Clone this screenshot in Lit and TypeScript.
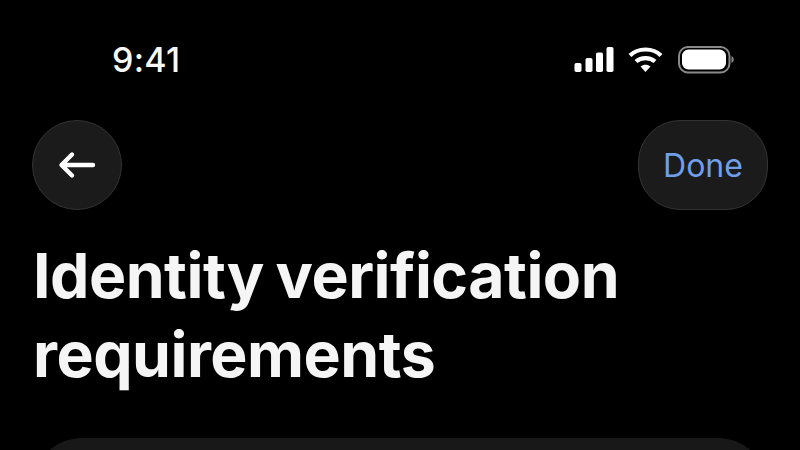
import { LitElement, html, css } from "lit";
import { customElement } from "lit/decorators.js";

@customElement("app-root")
export class AppRoot extends LitElement {
  static styles = css`
    :host { display: block; width: 800px; height: 450px; background: #000; overflow: hidden; font-family: Inter, "Liberation Sans", sans-serif; color: #f5f5f5; }
    .status { display: flex; justify-content: space-between; align-items: center; height: 38px; padding: 41px 60px 0 112px; }
    .time { font-size: 34px; font-weight: 500; line-height: 38px; letter-spacing: 0.3px; color: #f7f7f7; }
    .icons { display: flex; align-items: center; }
    .nav { display: flex; justify-content: space-between; align-items: center; padding: 41px 32px 0 32px; }
    .back, .done { box-sizing: border-box; height: 90px; background: #1b1b1b; border: 1.5px solid #333; display: flex; align-items: center; justify-content: center; }
    .back { width: 90px; border-radius: 50%; }
    .done { width: 130px; border-radius: 42px; color: #6f9fe8; font-size: 32px; font-weight: 400; }
    h1 { margin: 26px 0 0 0; padding-left: 33px; font-size: 62.5px; line-height: 79px; font-weight: 700; letter-spacing: -0.5px; word-spacing: -2.5px; color: #f5f5f5; }
    .card { margin: 44px 32px 0; height: 200px; background: #181818; border-radius: 50px; }
  `;

  render() {
    return html`
      <div class="status">
        <span class="time">9:41</span>
        <div class="icons">
          <svg width="170" height="32" viewBox="570 44 170 32">
            <g fill="#fff">
              <rect x="574.5" y="63" width="7" height="9" rx="1.8"/>
              <rect x="585.5" y="58" width="7" height="14" rx="1.8"/>
              <rect x="596" y="52.5" width="7" height="19.5" rx="1.8"/>
              <rect x="606.5" y="47" width="7" height="25" rx="1.8"/>
            </g>
            <g fill="none" stroke="#fff" stroke-width="4.2">
              <path d="M630 55.5 C638 47.5 653 47.5 661 55.5"/>
              <path d="M636 61.5 C641 57 650 57 655 61.5"/>
            </g>
            <path d="M640.5 66.5 C643.5 64 647.5 64 650.5 66.5 L645.5 72 Z" fill="#fff"/>
            <rect x="679" y="47" width="50.5" height="25.5" rx="9" fill="none" stroke="#8a8a8a" stroke-width="2"/>
            <rect x="682" y="49.5" width="44" height="20" rx="6.5" fill="#fff"/>
            <path d="M731.5 56 C734.5 57.5 734.5 61.5 731.5 63 Z" fill="#8a8a8a"/>
          </svg>
        </div>
      </div>
      <div class="nav">
        <div class="back">
          <svg width="40" height="32" viewBox="0 0 40 32" fill="none" stroke="#fff" stroke-width="4.4" stroke-linecap="round" stroke-linejoin="round">
            <path d="M36 16 H5 M15 5.5 L4.5 16 L15 26.5"/>
          </svg>
        </div>
        <div class="done">Done</div>
      </div>
      <h1>Identity verification<br />requirements</h1>
      <div class="card"></div>
    `;
  }
}
